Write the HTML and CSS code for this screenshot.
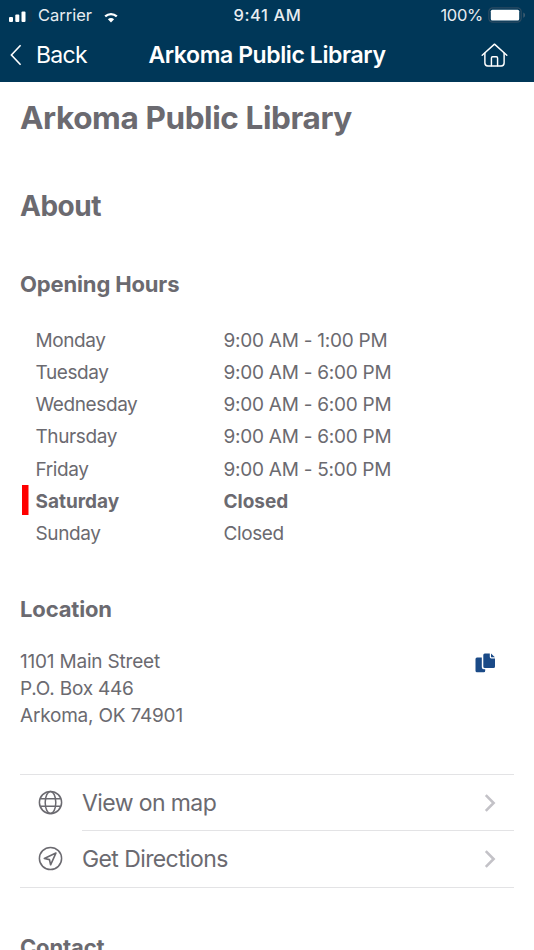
FILE: index.html
```
<!DOCTYPE html>
<html lang="en">
<head>
    <meta charset="UTF-8">
    <meta name="viewport" content="width=device-width, initial-scale=1.0">
    <title>Arkoma Public Library</title>
    <link rel="stylesheet" href="styles.css">
</head>
<body>
    <header class="header">
        <div class="status-bar">
            <div class="status-left">
                <svg class="signal" width="24" height="13" viewBox="0 0 24 13">
                    <rect x="0" y="7" width="4" height="5" rx="1" fill="#fff"/>
                    <rect x="6.3" y="4.5" width="4" height="7.5" rx="1" fill="#fff"/>
                    <rect x="12.5" y="1.5" width="4" height="10.5" rx="1" fill="#fff"/>
                    <rect x="19" y="0" width="4" height="12" rx="1" fill="#0c3450"/>
                </svg>
                <span class="carrier">Carrier</span>
                <svg class="wifi" width="18" height="13" viewBox="0 0 18 13">
                    <path d="M1 3.6C5.5 -.2 12.5 -.2 17 3.6" fill="none" stroke="#0c3450" stroke-width="2"/>
                    <path d="M3.2 6.4C6.6 3.3 11.4 3.3 14.8 6.4" fill="none" stroke="#fff" stroke-width="2.3"/>
                    <path d="M5.9 9.2C7.7 7.7 10.3 7.7 12.1 9.2L9 12.4Z" fill="#fff"/>
                </svg>
            </div>
            <span class="time">9:41 AM</span>
            <div class="status-right">
                <span class="percent">100%</span>
                <svg class="battery" width="38" height="16" viewBox="0 0 38 16">
                    <rect x=".8" y=".8" width="32.4" height="14.4" rx="4" fill="none" stroke="#2b4b62" stroke-width="1.2"/>
                    <rect x="2.8" y="2.8" width="28.4" height="10.6" rx="1.5" fill="#fff"/>
                    <path d="M35.3 5.5C37.6 6.3 37.6 9.9 35.3 10.7Z" fill="#3f5c70"/>
                </svg>
            </div>
        </div>
        <nav class="nav-bar">
            <a class="back" href="#">
                <svg width="12" height="22" viewBox="0 0 12 22">
                    <path d="M10.6 1.2L1.4 11l9.2 9.8" fill="none" stroke="#fff" stroke-width="1.6"/>
                </svg>
                <span>Back</span>
            </a>
            <span class="nav-title">Arkoma Public Library</span>
            <a class="home" href="#">
                <svg width="27" height="25" viewBox="0 0 28 26" fill="none" stroke="#fff" stroke-width="1.5" stroke-linejoin="round" stroke-linecap="round">
                    <path d="M1.2 12.8L14 1.2l12.8 11.6"/>
                    <path d="M4 10.5V20.9q0 3 3 3H21q3 0 3-3V10.5"/>
                    <path d="M10.8 23.7v-8.2q0-1.2 1.2-1.2h4q1.2 0 1.2 1.2v8.2"/>
                </svg>
            </a>
        </nav>
    </header>

    <main class="content">
        <h1>Arkoma Public Library</h1>
        <h2>About</h2>

        <h3>Opening Hours</h3>
        <div class="hours">
            <div class="day"><span>Monday</span><span class="range">9:00 AM - 1:00 PM</span></div>
            <div class="day"><span>Tuesday</span><span class="range">9:00 AM - 6:00 PM</span></div>
            <div class="day"><span>Wednesday</span><span class="range">9:00 AM - 6:00 PM</span></div>
            <div class="day"><span>Thursday</span><span class="range">9:00 AM - 6:00 PM</span></div>
            <div class="day"><span>Friday</span><span class="range">9:00 AM - 5:00 PM</span></div>
            <div class="day today"><span>Saturday</span><span>Closed</span></div>
            <div class="day"><span>Sunday</span><span>Closed</span></div>
        </div>

        <h3 class="location-title">Location</h3>
        <div class="location">
            <address>1101 Main Street<br>P.O. Box 446<br>Arkoma, OK 74901</address>
            <svg class="copy" width="21" height="20" viewBox="0 0 21 20" fill="#1a4a87">
                <path d="M6.8 4.5H2Q.5 4.5 .5 6V17.7Q.5 19.2 2 19.2H8.7Q10.2 19.2 10.2 17.7V16.2H8.8Q6.8 16.2 6.8 14.2Z"/>
                <path d="M9.8 .5H14.8V4Q14.8 5.4 16.2 5.4H20V13.5Q20 15 18.5 15H9.8Q8.3 15 8.3 13.5V2Q8.3 .5 9.8 .5Z"/>
                <path d="M16 .6L19.900 4.3H16.6Q16 4.3 16 3.7Z"/>
            </svg>
        </div>

        <div class="links">
            <a class="link" href="#">
                <svg width="25" height="25" viewBox="0 0 25 25" fill="none" stroke="#6b6a70" stroke-width="1.5">
                    <circle cx="12.5" cy="12.5" r="11.1"/>
                    <ellipse cx="12.5" cy="12.5" rx="5.3" ry="11.1"/>
                    <path d="M2 8.7H23M2 16.3H23"/>
                </svg>
                <span class="link-row">View on map
                    <svg width="12" height="18" viewBox="0 0 12 18"><path d="M1.8 1.2L9.6 9l-7.8 7.8" fill="none" stroke="#c3c2c7" stroke-width="2.6"/></svg>
                </span>
            </a>
            <a class="link" href="#">
                <svg width="25" height="25" viewBox="0 0 25 25" fill="none" stroke="#6b6a70" stroke-width="1.5">
                    <circle cx="12.5" cy="12.5" r="11.1"/>
                    <path d="M17.9 7.1L6.3 12.5l5.2 1.1 1.1 5.200Z" stroke-width="1.6" stroke-linejoin="round"/>
                </svg>
                <span class="link-row">Get Directions
                    <svg width="12" height="18" viewBox="0 0 12 18"><path d="M1.8 1.2L9.6 9l-7.8 7.8" fill="none" stroke="#c3c2c7" stroke-width="2.6"/></svg>
                </span>
            </a>
        </div>

        <h3 class="contact-title">Contact</h3>
    </main>
</body>
</html>
```
FILE: styles.css
```
* {
    box-sizing: border-box;
}

body {
    margin: 0;
    height: 950px;
    overflow: hidden;
    background: #fff;
    color: #6b6a70;
    font-family: 'Inter', sans-serif;
}

a {
    color: inherit;
    text-decoration: none;
}

svg {
    display: block;
    flex-shrink: 0;
}

/* Header */
.header {
    height: 82px;
    background: #003758;
    color: #fff;
}

.status-bar {
    height: 30px;
    display: grid;
    grid-template-columns: 1fr auto 1fr;
    align-items: center;
    padding: 0 8px 0 9px;
    font-size: 16.5px;
    color: #e8edf1;
}

.status-left,
.status-right {
    display: flex;
    align-items: center;
}

.status-right {
    justify-content: flex-end;
}

.signal {
    margin-top: 3px;
}

.carrier {
    margin-left: 5px;
}

.wifi {
    margin: 3px 0 0 10px;
}

.time {
    font-weight: 500;
    letter-spacing: 0.6px;
}

.percent {
    letter-spacing: -0.3px;
    margin-right: 5px;
}

.nav-bar {
    height: 50px;
    display: grid;
    grid-template-columns: 1fr auto 1fr;
    align-items: center;
    padding: 0 10px;
    font-size: 23px;
}

.back {
    display: flex;
    align-items: center;
    gap: 14px;
    letter-spacing: -0.7px;
}

.nav-title {
    font-weight: 600;
    letter-spacing: -0.4px;
}

.home {
    justify-self: end;
    margin-right: 16px;
}

/* Page content */
.content {
    padding: 18px 20px 0;
}

h1,
h2,
h3 {
    margin: 0;
    font-weight: 700;
}

h1 {
    font-size: 31.5px;
    line-height: 36px;
    letter-spacing: -0.4px;
}

h2 {
    margin-top: 52px;
    font-size: 28px;
    line-height: 36px;
    letter-spacing: -0.5px;
}

h3 {
    margin-top: 45px;
    font-size: 22px;
    line-height: 30px;
    letter-spacing: -0.15px;
}

.hours {
    margin-top: 25px;
    font-size: 19px;
    letter-spacing: -0.4px;
}

.day {
    display: grid;
    grid-template-columns: 188px 1fr;
    align-items: center;
    height: 32.25px;
    margin-left: 2px;
    padding-left: 13.5px;
}

.range {
    letter-spacing: -0.25px;
}

.today {
    font-weight: 700;
    letter-spacing: 0;
    background: linear-gradient(#f00, #f00) 0 0 / 6.5px 30px no-repeat;
}

.location-title {
    margin-top: 44px;
}

.location {
    display: flex;
    justify-content: space-between;
    margin-top: 24px;
    padding-right: 18px;
}

address {
    font-style: normal;
    font-size: 19px;
    line-height: 27px;
    letter-spacing: -0.2px;
}

.copy {
    margin-top: 5px;
}

/* Link list */
.links {
    margin-top: 45px;
    border-top: 1px solid #e3e3e5;
    border-bottom: 1px solid #e3e3e5;
}

.link {
    display: flex;
    align-items: center;
    padding-left: 18px;
    font-size: 23px;
    letter-spacing: -0.6px;
}

.link-row {
    flex: 1;
    display: flex;
    align-items: center;
    justify-content: space-between;
    height: 56px;
    margin-left: 19px;
    padding: 1px 18px 0 0;
}

.link:first-child .link-row {
    border-bottom: 1px solid #e3e3e5;
}

.contact-title {
    margin-top: 44px;
}
```
